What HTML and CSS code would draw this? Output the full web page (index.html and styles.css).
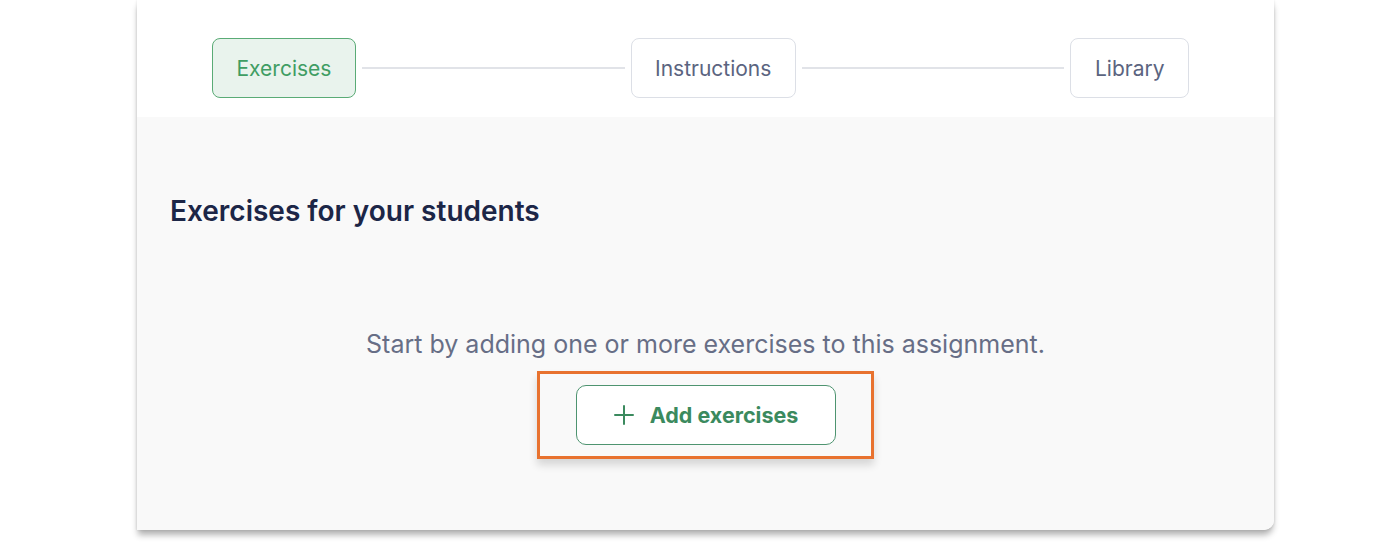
FILE: index.html
```html
<!DOCTYPE html>
<html lang="en">
<head>
<meta charset="utf-8">
<title>Exercises</title>
<link rel="stylesheet" href="styles.css">
</head>
<body>
<div class="page">
<div class="card">
  <div class="stepper">
    <div class="step step-active">Exercises</div>
    <div class="connector"></div>
    <div class="step">Instructions</div>
    <div class="connector"></div>
    <div class="step">Library</div>
  </div>
  <div class="body">
    <h2 class="heading">Exercises for your students</h2>
    <p class="hint">Start by adding one or more exercises to this assignment.</p>
    <div class="highlight-wrap">
      <div class="highlight">
        <button class="add-btn" type="button">
          <svg class="plus" width="20" height="20" viewBox="0 0 20 20" aria-hidden="true"><path d="M10 1v18M1 10h18" stroke="currentColor" stroke-width="2" fill="none" stroke-linecap="round"/></svg>
          <span>Add exercises</span>
        </button>
      </div>
    </div>
  </div>
</div>
</div>
</body>
</html>
```

FILE: styles.css
```css
html, body {
  margin: 0;
  padding: 0;
  background: #ffffff;
  font-family: Inter, "Noto Sans", "Liberation Sans", sans-serif;
}

.page {
  padding-bottom: 30px;
}

.card {
  margin-left: 137px;
  width: 1137px;
  background: #ffffff;
  border-bottom-right-radius: 10px;
  box-shadow: 0 6px 6px -1px rgba(0, 0, 0, 0.3), 0 0 3px rgba(0, 0, 0, 0.12);
  overflow: hidden;
}

.stepper {
  height: 117px;
  box-sizing: border-box;
  padding: 38px 85px 0 75px;
  display: flex;
  align-items: flex-start;
  background: #ffffff;
}

.step {
  box-sizing: border-box;
  height: 60px;
  padding: 0 23.5px;
  display: flex;
  align-items: center;
  justify-content: center;
  border: 1.5px solid #dcdfe6;
  border-radius: 8px;
  font-size: 21px;
  color: #5b6480;
  background: #ffffff;
  white-space: nowrap;
}

.step-active {
  border-color: #5aab76;
  background: #e9f3ed;
  color: #3f9d63;
}

.connector {
  flex: 1;
  height: 2px;
  margin: 29px 6px 0;
  background: #e1e3e8;
}

.body {
  background: #f9f9f9;
  padding: 78px 33px 71px;
}

.heading {
  margin: 0;
  font-size: 28px;
  line-height: 32px;
  font-weight: 600;
  color: #1c2647;
}

.hint {
  margin: 101px 0 0;
  text-align: center;
  font-size: 25px;
  line-height: 32px;
  color: #676e86;
}

.highlight-wrap {
  margin-top: 11px;
  display: flex;
  justify-content: center;
}

.highlight {
  border: 3px solid #e8722f;
  padding: 11px 35px 11px 36px;
  box-shadow: 0 6px 8px rgba(0, 0, 0, 0.14);
}

.add-btn {
  box-sizing: border-box;
  width: 260px;
  height: 60px;
  display: flex;
  align-items: center;
  justify-content: center;
  gap: 16px;
  border: 1.5px solid #4e9470;
  border-radius: 10px;
  background: #ffffff;
  color: #3b8a5e;
  font-family: Inter, "Noto Sans", "Liberation Sans", sans-serif;
  font-size: 21.5px;
  font-weight: 700;
  cursor: pointer;
}

.plus {
  display: block;
}
```
